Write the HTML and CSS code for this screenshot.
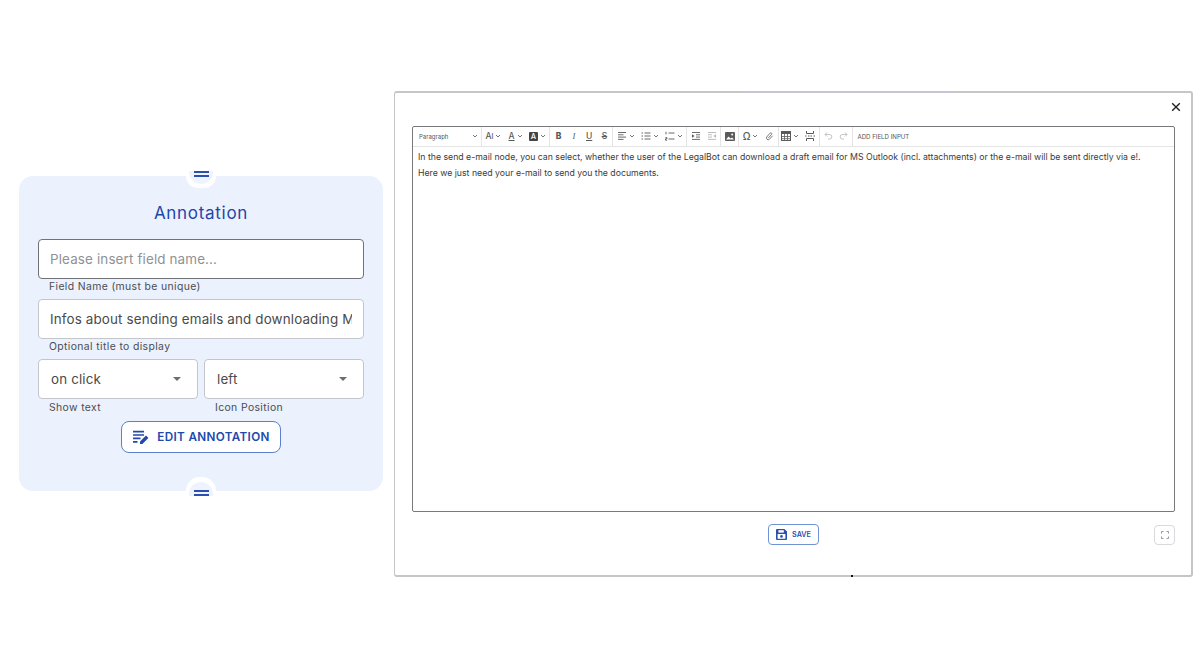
FILE: index.html
```html
<!DOCTYPE html>
<html lang="en">
<head>
<meta charset="utf-8">
<title>Annotation</title>
<link rel="stylesheet" href="styles.css">
</head>
<body>
<svg class="defs" width="0" height="0" aria-hidden="true">
  <symbol id="chev" viewBox="0 0 8 8"><path d="M2 3 4 5l2-2" fill="none" stroke="currentColor" stroke-width=".9"/></symbol>
  <symbol id="align" viewBox="0 0 10 10"><path d="M1 1.500h8M1 3.800h5.500M1 6.100h8M1 8.400h5.500" fill="none" stroke="currentColor" stroke-width=".9"/></symbol>
  <symbol id="list" viewBox="0 0 10 10"><path d="M3.500 2h6M3.500 5h6M3.500 8h6M.5 2h1.500M.5 5h1.500M.5 8h1.500" fill="none" stroke="currentColor" stroke-width=".9"/></symbol>
  <symbol id="numlist" viewBox="0 0 10 10"><path d="M3.500 2h6M3.500 8h6M1 .8v2.600M.4 6.600h1.600v1.200H.5v1.400h1.600" fill="none" stroke="currentColor" stroke-width=".9"/></symbol>
  <symbol id="indent" viewBox="0 0 10 10"><path d="M1 1.500h8M5 3.800h4M5 6.100h4M1 8.400h8" fill="none" stroke="currentColor" stroke-width=".9"/><path d="M1 3.200v3.600L3.600 5z" fill="currentColor"/></symbol>
</svg>
<div class="stage">
  <section class="card">
    <span class="handle handle-top"><span class="bars"></span></span>
    <h1 class="card-title">Annotation</h1>
    <div class="field field-focus"><span class="placeholder">Please insert field name...</span></div>
    <p class="hint">Field Name (must be unique)</p>
    <div class="field"><span class="value clip">Infos about sending emails and downloading MS Outlook drafts</span></div>
    <p class="hint">Optional title to display</p>
    <div class="pair">
      <div class="pair-col">
        <div class="field select"><span class="value">on click</span><span class="caret"></span></div>
        <p class="hint hint-low">Show text</p>
      </div>
      <div class="pair-col">
        <div class="field select"><span class="value">left</span><span class="caret"></span></div>
        <p class="hint hint-low">Icon Position</p>
      </div>
    </div>
    <button class="edit-btn" type="button">
      <svg width="18" height="16" viewBox="0 0 18 16"><path d="M1 2.600h11M1 6h11M1 9.400h7.500M1 12.800h4.500" fill="none" stroke="currentColor" stroke-width="1.700"/><path d="M8 15v-2.400l6-6 2.400 2.400-6 6z" fill="currentColor"/></svg>
      EDIT ANNOTATION
    </button>
    <span class="handle handle-bottom"><span class="bars"></span></span>
  </section>

  <section class="modal">
    <span class="modal-notch"></span>
    <span class="modal-dot"></span>
    <div class="modal-head">
      <svg class="close" width="10" height="10" viewBox="0 0 10 10"><path d="M1.200 1.200l7.600 7.600M8.800 1.200L1.200 8.800" stroke="#222" stroke-width="1.400"/></svg>
    </div>
    <div class="editor">
      <div class="toolbar">
        <span class="tool para">Paragraph<svg class="ch" width="8" height="8"><use href="#chev"/></svg></span>
        <i class="sep"></i>
        <span class="tool drop"><b class="glyph">A<small>I</small></b><svg class="ch" width="8" height="8"><use href="#chev"/></svg></span>
        <span class="tool drop"><b class="glyph under">A</b><svg class="ch" width="8" height="8"><use href="#chev"/></svg></span>
        <span class="tool drop"><b class="glyph boxed">A</b><svg class="ch" width="8" height="8"><use href="#chev"/></svg></span>
        <i class="sep"></i>
        <span class="tool btn"><b class="glyph heavy">B</b></span>
        <span class="tool btn"><b class="glyph ital">I</b></span>
        <span class="tool btn"><b class="glyph under">U</b></span>
        <span class="tool btn"><b class="glyph strike">S</b></span>
        <i class="sep"></i>
        <span class="tool drop wide"><svg width="10" height="10"><use href="#align"/></svg><svg class="ch" width="8" height="8"><use href="#chev"/></svg></span>
        <span class="tool drop wide"><svg width="10" height="10"><use href="#list"/></svg><svg class="ch" width="8" height="8"><use href="#chev"/></svg></span>
        <span class="tool drop wide"><svg width="10" height="10"><use href="#numlist"/></svg><svg class="ch" width="8" height="8"><use href="#chev"/></svg></span>
        <i class="sep"></i>
        <span class="tool btn2"><svg width="10" height="10"><use href="#indent"/></svg></span>
        <span class="tool btn2 dim"><svg class="flip" width="10" height="10"><use href="#indent"/></svg></span>
        <i class="sep"></i>
        <span class="tool btn2"><svg width="10" height="9" viewBox="0 0 10 9"><rect width="10" height="9" rx="1" fill="currentColor"/><path d="M1 7.500 3.500 4.500 5.500 6.500 7 5.500 9 7.500z" fill="#fff"/><circle cx="7.200" cy="2.500" r="1" fill="#fff"/></svg></span>
        <i class="sep"></i>
        <span class="tool drop"><b class="glyph omega">Ω</b><svg class="ch" width="8" height="8"><use href="#chev"/></svg></span>
        <span class="tool btn1"><svg width="9" height="9" viewBox="0 0 9 9"><path d="M3.200 6.200 6.600 2.400a1 1 0 0 0-1.500-1.300L1.700 5a1.800 1.800 0 0 0 2.700 2.300L7.600 3.800" fill="none" stroke="currentColor" stroke-width=".8"/></svg></span>
        <i class="sep"></i>
        <span class="tool drop"><svg width="10" height="10" viewBox="0 0 10 10"><rect x=".5" y=".5" width="9" height="9" fill="none" stroke="currentColor"/><path d="M3.500 3v7M6.500 3v7M0 5.500h10M0 7.700h10" fill="none" stroke="currentColor" stroke-width=".8"/><rect width="10" height="3" fill="currentColor"/></svg><svg class="ch" width="8" height="8"><use href="#chev"/></svg></span>
        <span class="tool btn3"><svg width="10" height="10" viewBox="0 0 10 10"><path d="M1.500 0v2.500h7V0M1.500 10V7.500h7V10M0 5h1.500M3 5h1.500M5.500 5H7M8.500 5H10" fill="none" stroke="currentColor"/></svg></span>
        <i class="sep"></i>
        <span class="tool btn1 dim"><svg width="9" height="8" viewBox="0 0 9 8"><path d="M3 .5 1 2.500l2 2M1 2.500h4.500a2.300 2.300 0 0 1 0 4.600H4" fill="none" stroke="currentColor" stroke-width=".8"/></svg></span>
        <span class="tool btn1 dim"><svg class="flip" width="9" height="8" viewBox="0 0 9 8"><path d="M3 .5 1 2.500l2 2M1 2.500h4.500a2.300 2.300 0 0 1 0 4.600H4" fill="none" stroke="currentColor" stroke-width=".8"/></svg></span>
        <i class="sep"></i>
        <span class="add-field">ADD FIELD INPUT</span>
      </div>
      <div class="content">
        <p>In the send e-mail node, you can select, whether the user of the LegalBot can download a draft email for MS Outlook (incl. attachments) or the e-mail will be sent directly via e!.</p>
        <p>Here we just need your e-mail to send you the documents.</p>
      </div>
    </div>
    <div class="modal-foot">
      <button class="save-btn" type="button">
        <svg width="11" height="11" viewBox="0 0 11 11"><path d="M1 0h7.400L11 2.600V10a1 1 0 0 1-1 1H1a1 1 0 0 1-1-1V1a1 1 0 0 1 1-1z" fill="currentColor"/><rect x="2.400" y="1.200" width="5.400" height="2.400" fill="#fff"/><rect x="1.600" y="5" width="7.800" height="4.800" fill="#fff"/><circle cx="5.500" cy="7.400" r="1.300" fill="currentColor"/></svg>
        SAVE
      </button>
      <button class="full-btn" type="button" aria-label="Fullscreen">
        <svg width="8" height="8" viewBox="0 0 8 8"><path d="M.5 2.500v-2h2M5.500 .5h2v2M7.500 5.500v2h-2M2.500 7.500h-2v-2" fill="none" stroke="#8a8d92" stroke-width=".9"/></svg>
      </button>
    </div>
  </section>
</div>
</body>
</html>
```
FILE: styles.css
```css
* { box-sizing: border-box; }
html, body { margin: 0; height: 100%; background: #fff; overflow: hidden; }
body { font-family: "Inter", "Liberation Sans", sans-serif; color: #444; }
.defs { position: absolute; }
p, h1 { margin: 0; }

.stage {
  height: 660px;
  display: flex;
  align-items: center;
  padding: 7px 0 0 19px;
  gap: 11px;
}

/* Left card */
.card {
  position: relative;
  width: 364px;
  height: 315px;
  flex: none;
  background: #ebf1fd;
  border-radius: 14px;
  padding: 27px 19px 0;
  display: flex;
  flex-direction: column;
}
.card-title {
  font-size: 17px;
  font-weight: 400;
  letter-spacing: .7px;
  color: #1f45a8;
  text-align: center;
  line-height: 20px;
  margin-bottom: 16px;
}
.handle {
  position: absolute;
  left: 167px;
  width: 30px;
  background: #fff;
  display: flex;
  justify-content: center;
}
.handle-top { top: 0; height: 12px; border-radius: 0 0 15px 15px; align-items: flex-start; }
.handle-bottom { bottom: 0; height: 14px; border-radius: 15px 15px 0 0; align-items: flex-end; }
.handle::after {
  content: "";
  position: absolute;
  left: 3px;
  width: 24px;
  background: #eef3fe;
  z-index: 0;
}
.handle-top::after { top: -5px; height: 13px; border-radius: 0 0 12px 12px; }
.handle-bottom::after { bottom: -5px; height: 14px; border-radius: 12px 12px 0 0; }
.bars {
  position: relative;
  z-index: 1;
  width: 15px;
  height: 6px;
  border-top: 2px solid #2a4fb0;
  border-bottom: 2px solid #2a4fb0;
}
.handle-top .bars { margin-top: -5px; }
.handle-bottom .bars { margin-bottom: -5px; }

.field {
  height: 40px;
  flex: none;
  background: #fff;
  border: 1px solid #c3c6cc;
  border-radius: 4px;
  padding: 0 11px;
  display: flex;
  align-items: center;
  font-size: 13.400px;
  letter-spacing: .15px;
}
.field-focus { border-color: #6f7277; }
.placeholder { color: #8f9195; }
.value { color: #4a4a4a; }
.clip { display: block; white-space: nowrap; overflow: hidden; }
.hint {
  font-size: 10.400px;
  letter-spacing: .38px;
  line-height: 14px;
  padding: 1px 0 5px 11px;
  height: 20px;
  color: #4a4d52;
}
.pair { display: flex; gap: 6px; }
.pair-col { width: 160px; }
.select { justify-content: space-between; padding: 0 16px 0 12px; }
.caret {
  width: 0;
  height: 0;
  border-left: 4.500px solid transparent;
  border-right: 4.500px solid transparent;
  border-top: 4.500px solid #6b6d70;
}
.hint-low { padding-top: 2px; height: 22px; }
.edit-btn {
  align-self: center;
  width: 160px;
  height: 32px;
  display: flex;
  align-items: center;
  justify-content: center;
  gap: 7px;
  background: #fff;
  border: 1px solid #5b80cc;
  border-radius: 8px;
  color: #2148ad;
  font: 600 11.700px "Inter", "Liberation Sans", sans-serif;
  letter-spacing: .35px;
  padding: 0;
}

/* Modal */
.modal {
  position: relative;
  width: 799px;
  height: 486px;
  flex: none;
  background: #fff;
  border: 2px solid #c6c6c6;
  border-left-width: 1px;
  border-radius: 3px;
  padding: 0 16px 0 17px;
  display: flex;
  flex-direction: column;
}
.modal-notch {
  position: absolute;
  top: -2px;
  left: 350px;
  width: 210px;
  height: 2px;
  background: #c4c6d8;
}
.modal-dot {
  position: absolute;
  bottom: -2px;
  left: 456px;
  width: 2px;
  height: 2px;
  background: #111;
}
.modal-head {
  height: 33px;
  flex: none;
  display: flex;
  justify-content: flex-end;
  align-items: flex-end;
}
.close { margin-right: -6px; margin-bottom: 14px; }
.editor {
  height: 386px;
  flex: none;
  border: 1px solid #77797c;
  border-radius: 2px;
  display: flex;
  flex-direction: column;
}
.toolbar {
  height: 20px;
  flex: none;
  border-bottom: 1px solid #e4e4e4;
  display: flex;
  align-items: center;
  color: #5a5a5a;
}
.tool { display: flex; align-items: center; justify-content: center; height: 100%; flex: none; }
.para { width: 68px; justify-content: space-between; padding: 0 2px 0 6px; font-size: 6px; color: #555; }
.drop { width: 22px; gap: 1px; }
.wide { width: 24px; }
.btn { width: 15.250px; }
.btn1 { width: 15.500px; }
.btn2 { width: 16px; }
.btn3 { width: 17px; }
.dim { color: #b5b5b5; }
.flip { transform: scaleX(-1); }
.sep { width: 1px; height: 100%; margin: 0 1px 0 0; background: #e4e4e4; flex: none; }
.ch { color: #666; }
.glyph { font-size: 8.500px; font-weight: 500; line-height: 10px; font-style: normal; }
.glyph small { font-size: 7px; }
.heavy { font-weight: 800; }
.ital { font-style: italic; font-family: "Liberation Serif", serif; }
.under { text-decoration: underline; text-underline-offset: 1px; }
.strike { text-decoration: line-through; }
.boxed { background: #444; color: #fff; width: 9px; height: 9px; line-height: 9px; font-size: 7.500px; text-align: center; border-radius: 1px; }
.omega { font-size: 10px; }
.add-field { font-size: 6.100px; margin-left: 4px; color: #555; white-space: nowrap; }
.content {
  flex: 1;
  padding: 2px 5px 0;
  font-size: 8.720px;
  line-height: 16px;
  color: #3c3c3c;
  white-space: nowrap;
}
.modal-foot {
  position: relative;
  display: flex;
  justify-content: center;
  padding-top: 12px;
}
.save-btn {
  width: 51px;
  height: 21px;
  display: flex;
  align-items: center;
  justify-content: center;
  gap: 5px;
  background: #fff;
  border: 1px solid #6f93d6;
  border-radius: 4px;
  color: #2a50ae;
  font: 600 7.200px "Inter", "Liberation Sans", sans-serif;
  padding: 0;
}
.full-btn {
  position: absolute;
  right: 0;
  top: 13px;
  width: 21px;
  height: 20px;
  display: flex;
  align-items: center;
  justify-content: center;
  background: #fff;
  border: 1px solid #d8d9dc;
  border-radius: 4px;
  padding: 0;
}
```
